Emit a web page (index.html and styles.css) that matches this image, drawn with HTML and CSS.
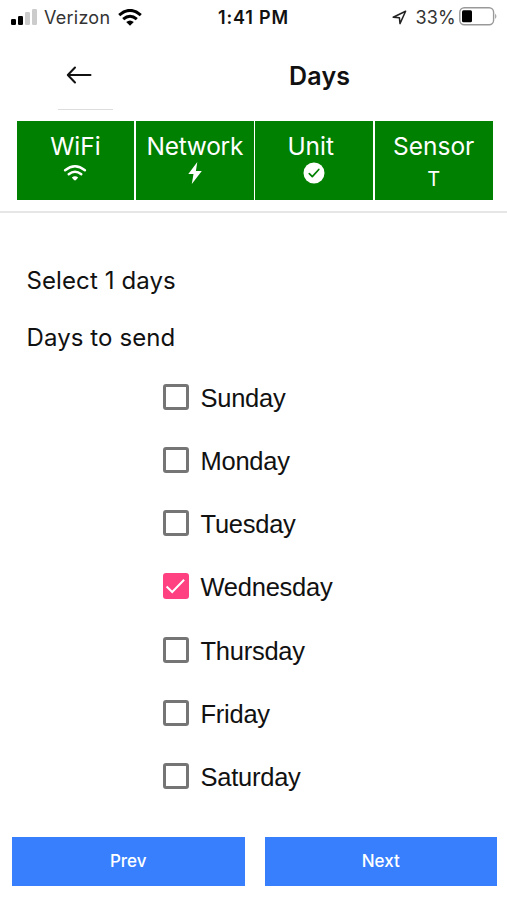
FILE: index.html
```html
<!DOCTYPE html>
<html lang="en">
<head>
<meta charset="utf-8">
<title>Days</title>
<link rel="stylesheet" href="styles.css">
</head>
<body>
<div class="screen">
  <div class="status">
    <div class="status-left">
      <svg class="signal" width="27" height="18" viewBox="0 0 27 18"><rect x="0" y="11" width="5" height="6" rx="1.2"/><rect x="7" y="8" width="5" height="9" rx="1.2"/><g fill="#ccc"><rect x="14" y="4" width="5" height="13" rx="1.2"/><rect x="21" y="1" width="5" height="16" rx="1.2"/></g></svg>
      <span class="carrier">Verizon</span>
      <svg class="wifi" width="24" height="17" viewBox="0 0 24 17"><g fill="none" stroke="#000" stroke-width="3"><path d="M1.2 6.1Q12-3.3 22.8 6.1"/><path d="M5.2 10.2Q12 4.3 18.8 10.2"/></g><path d="M8.2 13.1Q12 10 15.8 13.1L12 16.8z"/></svg>
    </div>
    <span class="time">1:41 PM</span>
    <div class="status-right">
      <svg class="location" width="15" height="15" viewBox="0 0 15 15"><path d="M1.2 7.2 13.6 1.2 8 13.6 7.4 7.7z" fill="none" stroke="#222" stroke-width="1.5" stroke-linejoin="round"/></svg>
      <span class="percent">33%</span>
      <svg class="battery" width="39" height="19" viewBox="0 0 39 19"><rect x=".8" y=".8" width="33.8" height="17" rx="4.5" fill="none" stroke="#999" stroke-width="1.4"/><rect x="3" y="3.3" width="10" height="12" rx="1.5"/><path d="M36.2 6.5q2.4 2.8 0 5.6z" fill="#999"/></svg>
    </div>
  </div>
  <header class="nav">
    <div class="back"><svg width="26" height="18" viewBox="0 0 26 18"><path d="M24.5 9H2M9 1.5 1.8 9 9 16.5" fill="none" stroke="#111" stroke-width="2" stroke-linecap="round" stroke-linejoin="round"/></svg></div>
    <h1 class="title">Days</h1>
  </header>
  <div class="steps">
    <div class="step"><span class="step-name">WiFi</span><svg width="24" height="18" viewBox="0 0 24 18"><g fill="none" stroke="#fff" stroke-width="2.4" stroke-linecap="round"><path d="M2.1 6.3Q12-1.6 21.9 6.3"/><path d="M5.7 10.3Q12 5.2 18.3 10.3"/></g><path d="M8.8 13.6Q12 11 15.2 13.6L13 16q-1 .8-2 0z" fill="#fff"/></svg></div>
    <div class="step"><span class="step-name network-name">Network</span><svg class="bolt" width="16" height="24" viewBox="0 0 16 24"><path d="M10.3 1 1.3 13h5.2L4.8 22.9 14.8 10H8.9z" fill="#fff"/></svg></div>
    <div class="step"><span class="step-name unit-name">Unit</span><svg class="done" width="22" height="22" viewBox="0 0 22 22"><circle cx="11" cy="11" r="10.5" fill="#fff"/><path d="m6.3 11.6 3 3L15.8 7.5" fill="none" stroke="green" stroke-width="1.7" stroke-linecap="round" stroke-linejoin="round"/></svg></div>
    <div class="step"><span class="step-name">Sensor</span><span class="letter">T</span></div>
  </div>
  <main class="content">
    <p class="line">Select 1 days</p>
    <p class="line">Days to send</p>
    <ul class="days">
      <li class="day"><span class="box"></span>Sunday</li>
      <li class="day"><span class="box"></span>Monday</li>
      <li class="day"><span class="box"></span>Tuesday</li>
      <li class="day"><span class="box checked"><svg width="26" height="26" viewBox="0 0 26 26"><path d="m3.6 13.5 5.6 5.5L21.1 6.7" fill="none" stroke="#fff" stroke-width="2"/></svg></span>Wednesday</li>
      <li class="day"><span class="box"></span>Thursday</li>
      <li class="day"><span class="box"></span>Friday</li>
      <li class="day"><span class="box"></span>Saturday</li>
    </ul>
  </main>
  <footer class="actions">
    <button class="button">Prev</button>
    <button class="button">Next</button>
  </footer>
</div>
</body>
</html>
```
FILE: styles.css
```css
* { box-sizing: border-box; }
body { margin: 0; background: #fff; color: #111; font-family: Inter, "Liberation Sans", sans-serif; }
svg { display: block; flex: none; }
.screen { width: 507px; height: 900px; overflow: hidden; display: flex; flex-direction: column; }
.status { height: 34px; flex: none; display: grid; grid-template-columns: 1fr auto 1fr; align-items: center; padding: 0 9px 0 11px; }
.status-left, .status-right { display: flex; align-items: center; }
.status-right { justify-content: flex-end; }
.signal { margin-top: -1px; }
.carrier { font-size: 18px; letter-spacing: .25px; margin-left: 6px; color: #333; }
.wifi { margin-left: 8px; }
.time { font-size: 18px; font-weight: 600; letter-spacing: .85px; margin-left: -2px; color: #111; }
.percent { font-size: 18px; letter-spacing: .2px; margin: 0 3px 0 8px; color: #333; }
.battery { margin-top: -1px; }
.nav { height: 87px; flex: none; display: flex; align-items: flex-start; padding-left: 58px; }
.back { width: 55px; height: 76px; padding: 32px 0 0 8px; border-bottom: 1.5px solid #ddd; }
.title { margin: 25px 0 0 176px; font-size: 25px; line-height: 34px; font-weight: 600; letter-spacing: .2px; }
.steps { height: 92px; flex: none; display: grid; grid-template-columns: repeat(4, 1fr); gap: 1.7px; padding: 0 14.5px 11px 16.5px; border-bottom: 2px solid #e6e6e6; }
.step { background: green; color: #fff; display: flex; flex-direction: column; align-items: center; padding-top: 10px; }
.step-name { font-size: 24.5px; line-height: 30px; margin-bottom: 3px; }
.network-name { letter-spacing: -.25px; }
.unit-name { margin-left: -7px; }
.bolt { margin-top: -3px; }
.done { margin-top: -2px; }
.letter { font-size: 20px; line-height: 30px; }
.content { flex: none; height: 624px; padding-top: 51px; }
.line { margin: 0 0 23px 26.5px; font-size: 24px; line-height: 34px; letter-spacing: .1px; }
.days { list-style: none; margin: 0; padding: 4.5px 0 0 163px; }
.day { height: 63.3px; display: flex; align-items: flex-start; font-family: "Liberation Sans", Arial, sans-serif; font-size: 25.5px; line-height: 30px; letter-spacing: -.25px; }
.box { width: 26px; height: 26px; margin: 1px 11.5px 0 0; border: 3px solid #757575; border-radius: 3px; flex: none; }
.checked { border: 0; background: #ff4081; }
.actions { display: flex; gap: 20px; padding: 0 10px 0 12px; }
.button { flex: 1; height: 49px; padding: 0; border: 0; background: #387ffe; color: #fff; font: 500 17px/49px Inter, sans-serif; }
```
